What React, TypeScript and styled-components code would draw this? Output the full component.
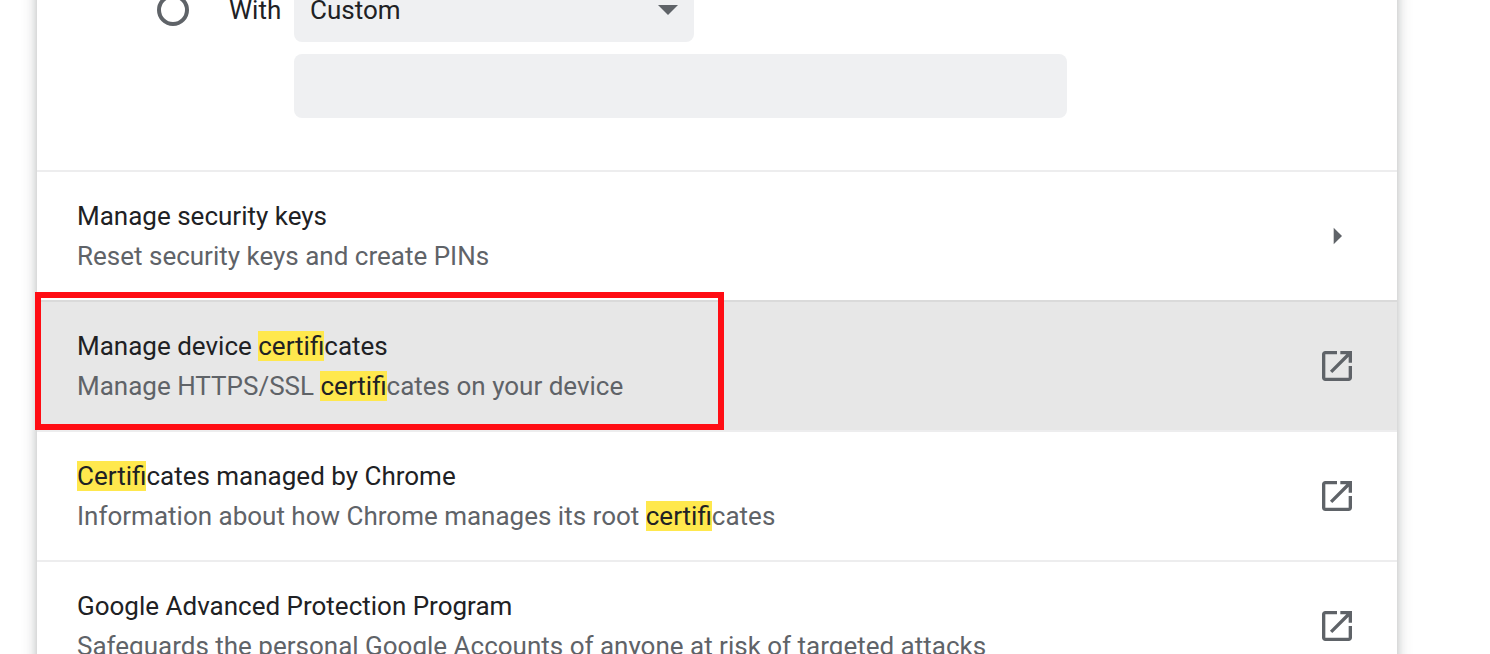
import styled, { createGlobalStyle } from "styled-components";

const GlobalStyle = createGlobalStyle`
  html, body {
    margin: 0;
    padding: 0;
    height: 654px;
    overflow: hidden;
    background-color: #fff;
    font-family: Roboto, "Liberation Sans", sans-serif;
  }
`;

const Page = styled.div`
  height: 654px;
  padding: 0 93px 0 37px;
  overflow: hidden;
`;

const Card = styled.div`
  width: 1360px;
  margin-top: -22px;
  background-color: #fff;
  box-shadow: 0 0 14px rgba(60, 64, 67, 0.3), 0 2px 6px rgba(60, 64, 67, 0.12);
`;

const SecureDns = styled.div`
  display: grid;
  grid-template-columns: 32px 105px 773px;
  row-gap: 12px;
  height: 192px;
  padding-left: 120px;
  box-sizing: border-box;
  align-content: start;
`;

const Radio = styled.div`
  width: 32px;
  height: 32px;
  margin-top: 16px;
  box-sizing: border-box;
  border: 4px solid #5f6368;
  border-radius: 50%;
`;

const WithLabel = styled.div`
  padding-left: 40px;
  font-size: 26px;
  line-height: 64px;
  color: #202124;
`;

const Select = styled.div`
  display: flex;
  align-items: center;
  justify-content: space-between;
  width: 400px;
  height: 64px;
  padding: 0 16px;
  box-sizing: border-box;
  border-radius: 8px;
  background-color: #eff0f2;
  font-size: 26px;
  color: #202124;
`;

const SelectArrow = styled.div`
  width: 0;
  height: 0;
  border-left: 10px solid transparent;
  border-right: 10px solid transparent;
  border-top: 10px solid #5f6368;
`;

const TextInput = styled.div`
  grid-column: 3;
  height: 64px;
  border-radius: 8px;
  background-color: #eff0f2;
`;

const Row = styled.div<{ $active?: boolean }>`
  position: relative;
  display: flex;
  align-items: center;
  justify-content: space-between;
  height: 130px;
  padding: 0 40px;
  box-sizing: border-box;
  border-top: 2px solid ${(p) => (p.$active ? "#dadada" : "#ededee")};
  background-color: ${(p) => (p.$active ? "#e7e7e7" : "#fff")};
`;

const RowText = styled.div`
  display: flex;
  flex-direction: column;
`;

const Title = styled.div`
  font-size: 26px;
  line-height: 40px;
  color: #202124;
`;

const Subtitle = styled.div`
  font-size: 26px;
  line-height: 40px;
  color: #5f6368;
`;

const Mark = styled.span`
  background-color: #ffe84d;
  color: #202124;
`;

const Highlight = styled.div`
  position: absolute;
  left: -2px;
  top: -10px;
  width: 689px;
  height: 138px;
  box-sizing: border-box;
  border: 6px solid #ff0d14;
  pointer-events: none;
`;

const Icon = styled.svg`
  flex: none;
  width: 40px;
  height: 40px;
  fill: #5f6368;
`;

function OpenInNew() {
  return (
    <Icon viewBox="0 0 24 24">
      <path d="M19 19H5V5h7V3H5c-1.11 0-2 .9-2 2v14c0 1.1.89 2 2 2h14c1.1 0 2-.9 2-2v-7h-2v7zM14 3v2h3.59l-9.83 9.83 1.41 1.41L19 6.41V10h2V3h-7z" />
    </Icon>
  );
}

function SubpageArrow() {
  return (
    <Icon viewBox="0 0 24 24">
      <path d="M10 17l5-5-5-5v10z" />
    </Icon>
  );
}

function App() {
  return (
    <>
      <GlobalStyle />
      <Page>
        <Card>
          <SecureDns>
            <Radio />
            <WithLabel>With</WithLabel>
            <Select>
              Custom
              <SelectArrow />
            </Select>
            <TextInput />
          </SecureDns>
          <Row>
            <RowText>
              <Title>Manage security keys</Title>
              <Subtitle>Reset security keys and create PINs</Subtitle>
            </RowText>
            <SubpageArrow />
          </Row>
          <Row $active>
            <RowText>
              <Title>
                Manage device <Mark>certifi</Mark>cates
              </Title>
              <Subtitle>
                Manage HTTPS/SSL <Mark>certifi</Mark>cates on your device
              </Subtitle>
            </RowText>
            <OpenInNew />
            <Highlight />
          </Row>
          <Row>
            <RowText>
              <Title>
                <Mark>Certifi</Mark>cates managed by Chrome
              </Title>
              <Subtitle>
                Information about how Chrome manages its root <Mark>certifi</Mark>cates
              </Subtitle>
            </RowText>
            <OpenInNew />
          </Row>
          <Row>
            <RowText>
              <Title>Google Advanced Protection Program</Title>
              <Subtitle>Safeguards the personal Google Accounts of anyone at risk of targeted attacks</Subtitle>
            </RowText>
            <OpenInNew />
          </Row>
        </Card>
      </Page>
    </>
  );
}

export default App;
